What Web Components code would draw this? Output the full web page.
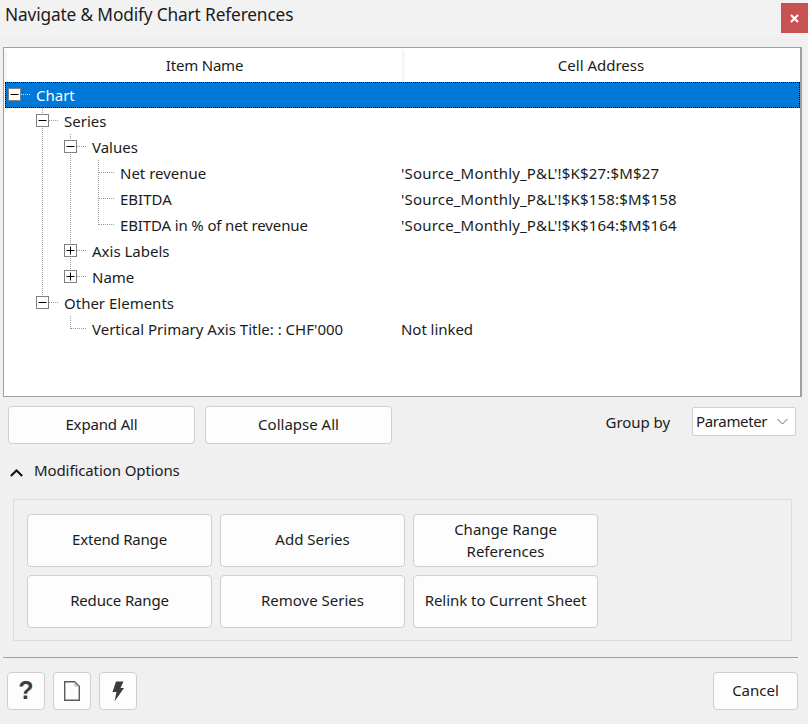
<!DOCTYPE html>
<html lang="en"><head><meta charset="utf-8"><title>Navigate & Modify Chart References</title>
<style>
html,body{margin:0;padding:0;background:#f0f0f0}
body{width:808px;height:724px;overflow:hidden;font:15px "Noto Sans",sans-serif;color:#1b1b1b}
</style></head><body>
<nav-dialog>
  <title-bar slot="title">Navigate &amp; Modify Chart References</title-bar>
  <tree-table slot="tree">
    <tree-row level="0" box="minus" selected>Chart</tree-row>
    <tree-row level="1" conn="tee" box="minus">Series</tree-row>
    <tree-row level="2" guides="1" conn="tee" box="minus">Values</tree-row>
    <tree-row level="3" guides="1 2" conn="tee" addr="'Source_Monthly_P&amp;L'!$K$27:$M$27">Net revenue</tree-row>
    <tree-row level="3" guides="1 2" conn="tee" addr="'Source_Monthly_P&amp;L'!$K$158:$M$158">EBITDA</tree-row>
    <tree-row level="3" guides="1 2" conn="end" addr="'Source_Monthly_P&amp;L'!$K$164:$M$164" style="--ls:-.14px">EBITDA in % of net revenue</tree-row>
    <tree-row level="2" guides="1" conn="tee" box="plus">Axis Labels</tree-row>
    <tree-row level="2" guides="1" conn="end" box="plus">Name</tree-row>
    <tree-row level="1" conn="end" box="minus">Other Elements</tree-row>
    <tree-row level="2" conn="end" addr="Not linked" style="--as:-.05px">Vertical Primary Axis Title: : CHF'000</tree-row>
  </tree-table>
  <tool-row slot="tools">
    <ui-button style="width:187px;height:38px;letter-spacing:-.15px">Expand All</ui-button>
    <ui-button style="width:187px;height:38px">Collapse All</ui-button>
    <group-select label="Group by" value="Parameter"></group-select>
  </tool-row>
  <section-head slot="head">Modification Options</section-head>
  <options-panel slot="panel">
    <ui-button style="letter-spacing:-.2px;padding-bottom:4px">Extend Range</ui-button>
    <ui-button style="padding-bottom:4px">Add Series</ui-button>
    <ui-button>Change Range<br>References</ui-button>
    <ui-button style="letter-spacing:-.15px;padding-bottom:4px">Reduce Range</ui-button>
    <ui-button style="padding-bottom:4px">Remove Series</ui-button>
    <ui-button style="letter-spacing:-.05px;padding-bottom:4px">Relink to Current Sheet</ui-button>
  </options-panel>
  <foot-bar slot="foot">
    <ui-button slot="icons" style="width:38px;height:38px"><span style="font:bold 25px 'Liberation Sans',sans-serif;color:#3c3c3c;line-height:1">?</span></ui-button>
    <ui-button slot="icons" style="width:38px;height:38px;padding-bottom:0"><svg width="16" height="20" viewBox="0 0 16 20" fill="none" stroke="#5a5a5a" stroke-width="1.4"><path d="M.7 .7h10L15.300 5.300V19.300H.7z"/><path d="M11 1v4h4" stroke-width=".8" stroke="#9a9a9a"/></svg></ui-button>
    <ui-button slot="icons" style="width:38px;height:38px;padding-bottom:0"><svg width="12" height="21" viewBox="0 0 12 21" fill="#3c3c3c"><path d="M4 0.500h7.500L8.500 7H12L2.500 20.500 4.500 11H0.500z"/></svg></ui-button>
    <ui-button slot="cancel" style="width:85px;height:38px">Cancel</ui-button>
  </foot-bar>
</nav-dialog>
<script>
function def(name, css, html){
  customElements.define(name, class extends HTMLElement{
    constructor(){super();this.attachShadow({mode:'open'}).innerHTML='<style>'+css+'</style>'+(typeof html==='function'?html(this):html);}
  });
}
def('nav-dialog',
 ':host{display:flex;flex-direction:column;width:808px;height:724px;box-sizing:border-box}',
 '<slot name="title"></slot><slot name="tree"></slot><slot name="tools"></slot><slot name="head"></slot><slot name="panel"></slot><slot name="foot"></slot>');
def('title-bar',
 ':host{display:flex;justify-content:space-between;align-items:flex-start;height:37px;background:#f2f2f2;flex:none}'+
 '.t{font-size:17.3px;line-height:30px;padding-left:5px;letter-spacing:-.15px}'+
 '.x{width:27px;height:30px;margin-top:3px;background:#c65252;display:flex;align-items:center;justify-content:center}',
 '<div class="t"><slot></slot></div><div class="x"><svg width="9" height="9" viewBox="0 0 9 9"><path d="M1 1l7 7M8 1L1 8" stroke="#fff" stroke-width="2.200"/></svg></div>');
def('tree-table',
 ':host{display:block;flex:none;box-sizing:border-box;width:799px;height:350px;margin:10px 0 0 3px;border:1px solid #a0a0a0;border-right-width:2px;background:#fff;padding-top:2px}'+
 '.h{display:grid;grid-template-columns:395px 395px;column-gap:3px;height:32px;padding-left:3px;background:#f6f6f6}'+
 '.h div{background:#fff;text-align:center;line-height:31px}'+
 '.h div:first-child{letter-spacing:-.2px}.h div+div{padding-right:3px}',
 '<div class="h"><div>Item Name</div><div>Cell Address</div></div><slot></slot>');
def('tree-row',
 ':host{display:grid;grid-template-columns:396px 1fr;height:26px;width:795px;box-sizing:border-box;line-height:27px;margin-left:1px}'+
 ':host([selected]){background:#0078d7;color:#fff;outline:1px dotted #000;outline-offset:-1px}'+
 '.n{display:flex;white-space:nowrap}svg{flex:none;display:block}.l{margin-left:4px;letter-spacing:var(--ls,0)}.a{white-space:nowrap;letter-spacing:var(--as,.18px)}',
 function(h){
  const L=+h.getAttribute('level');
  const g=(h.getAttribute('guides')||'').split(' ').filter(Boolean).map(Number);
  const conn=h.getAttribute('conn'),box=h.getAttribute('box');
  const W=28*(L+1)-1, X=d=>9.5+28*d;
  let s='';
  const dot='fill="none" stroke="#999" stroke-dasharray="1 1"';
  g.forEach(d=>{s+=`<path d="M${X(d)} 0V26" ${dot}/>`});
  const cy=12.5,cx=X(L);
  if(conn==='tee')s+=`<path d="M${cx} 0V26" ${dot}/>`;
  if(conn==='end')s+=`<path d="M${cx} 0V${cy+.5}" ${dot}/>`;
  if(conn||box)s+=`<path d="M${cx+.5} ${cy}H${W-2}" fill="none" stroke="${h.hasAttribute('selected')?'#cfe3f5':'#999'}" stroke-dasharray="1 1"/>`;
  if(box){
    s+=`<rect x="${cx-6}" y="${cy-6}" width="12" height="12" fill="#fff" stroke="#808080"/>`;
    s+=`<path d="M${cx-4} ${cy}h8" stroke="#000" fill="none"/>`;
    if(box==='plus')s+=`<path d="M${cx} ${cy-4}v8" stroke="#000" fill="none"/>`;
  }
  return `<div class="n"><svg width="${W}" height="26">${s}</svg><span class="l"><slot></slot></span></div><div class="a">${(h.getAttribute('addr')||'').replace(/&/g,'&amp;')}</div>`;
 });
def('tool-row',
 ':host{display:flex;flex:none;align-items:flex-start;gap:10px;margin:9px 12px 0 8px;height:38px}',
 '<slot></slot>');
def('ui-button',
 ':host{display:flex;align-items:center;justify-content:center;text-align:center;box-sizing:border-box;background:#fdfdfd;border:1px solid #cfcfcf;border-radius:4px;line-height:22px;padding-bottom:2px}',
 '<slot></slot>');
def('group-select',
 ':host{display:flex;align-items:flex-start;margin-left:auto;height:30px}'+
 '.l{line-height:32px;margin-right:22px;letter-spacing:-.05px}'+
 '.s{box-sizing:border-box;width:104px;height:29px;margin-top:1px;background:#fff;border:1px solid #cfcfcf;border-radius:2px;display:flex;align-items:center;justify-content:space-between;padding:0 7px 1px 3px}'+
 '.s span{letter-spacing:-.35px}',
 h=>`<span class="l">${h.getAttribute('label')}</span><div class="s"><span>${h.getAttribute('value')}</span><svg width="11" height="7" viewBox="0 0 11 7"><path d="M.5 1l5 5 5-5" fill="none" stroke="#666"/></svg></div>`);
def('section-head',
 ':host{display:flex;flex:none;align-items:center;height:26px;margin:13px 0 0 10px;letter-spacing:-.1px}'+
 'svg{margin-right:11px;margin-top:6px}'+
 'span{margin-top:-1px}',
 '<svg width="13" height="8" viewBox="0 0 13 8"><path d="M.8 7l5.700-5.500L12.200 7" fill="none" stroke="#111" stroke-width="2"/></svg><span><slot></slot></span>');
def('options-panel',
 ':host{display:grid;flex:none;grid-template-columns:repeat(3,185px);grid-template-rows:53px 53px;gap:8px;box-sizing:border-box;width:779px;height:142px;margin:16px 0 0 13px;padding:14px 13px 0;border:1px solid #dcdcdc}',
 '<slot></slot>');
def('foot-bar',
 ':host{display:flex;flex:none;justify-content:space-between;margin:16px 10px 0 3px;width:795px;box-sizing:border-box;padding:14px 0 0 4px;border-top:1px solid #a0a0a0}'+
 '.i{display:flex;gap:8px}',
 '<div class="i"><slot name="icons"></slot></div><slot name="cancel"></slot>');
</script>
</body></html>
